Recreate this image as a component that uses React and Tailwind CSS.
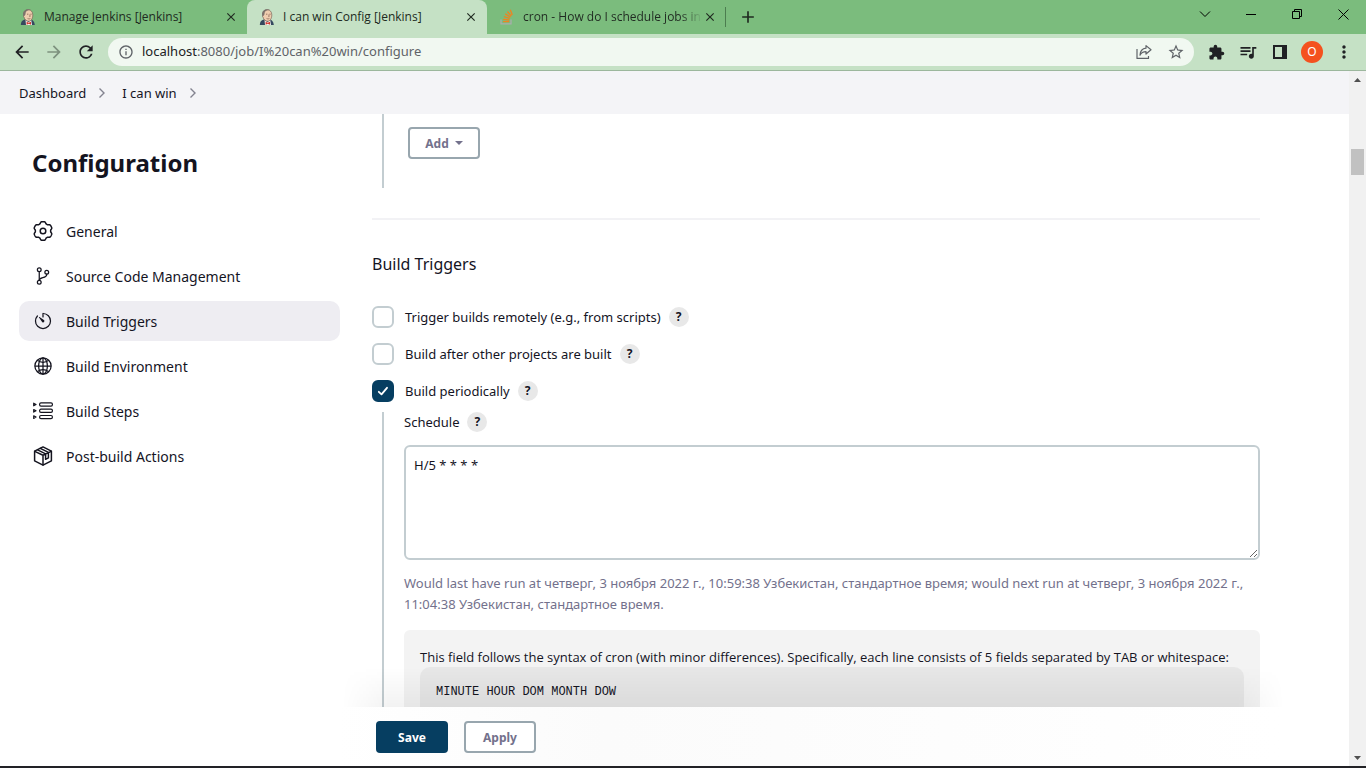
import React, { useState } from "react";
import {
  MdArrowBack,
  MdArrowForward,
  MdRefresh,
  MdExtension,
  MdQueueMusic,
  MdMoreVert,
  MdStarBorder,
  MdClose,
  MdAdd,
  MdInfoOutline,
} from "react-icons/md";
import { IoGitBranchOutline, IoTimerOutline, IoGlobeOutline } from "react-icons/io5";

function JenkinsLogo() {
  return (
    <svg width="16" height="16" viewBox="0 0 16 16" aria-hidden="true">
      <path d="M.8 16c0-3.200 1.400-5 4-5.600l6 .2c2.200.6 3.700 2 4 5.400z" fill="#35495f" />
      <path d="M5.500 11l3 2 2.700-2 .8 5H6z" fill="#f4f1ee" />
      <path d="M4.200 4.600C4.600 2 6.200.700 8.300.700c2.600 0 4.500 2 4.500 5.200 0 3.300-1.500 6.300-4.300 6.300-2.200 0-4-1.800-4.500-4.200-.8-.4-.8-1.900.2-1.800z" fill="#efcdaf" stroke="#6b5449" strokeWidth=".6" />
      <path d="M3.700 7.400C2 4.400 3.600.800 7.400.300c1.600-.2 2.800.100 3.600.700-2.600-.3-4.800.600-5.300 2.500-.2 1 0 2-.8 2.800z" fill="#7d736c" />
      <path d="M7 5.200h1.400M10.300 5.200h1.400M9.700 5.600l.5 1.800-.8.2M7.600 9.500c1 .5 2 .5 2.800 0" fill="none" stroke="#7a5547" strokeWidth=".7" />
      <path d="M6.600 12.700l2.200 1 2.200-1v3l-2.200-1-2.200 1z" fill="#d33a32" />
    </svg>
  );
}

function StackLogo() {
  return (
    <svg width="16" height="16" viewBox="0 0 16 16" aria-hidden="true" fill="none">
      <path d="M2 10.500v4.300h10v-4.300" stroke="#a9adad" strokeWidth="1.300" />
      <path d="M4 12.700h6.200M4.200 10.300l6.100.7M4.900 7.700l5.900 1.700M6.300 4.900l5.200 3.200M8.400 2.500l4 4.500M11.300.8l2 5.300" stroke="#ee8420" strokeWidth="1.300" />
    </svg>
  );
}

const gearPath =
  Array.from({ length: 120 }, (_, i) => {
    const a = (i / 120) * Math.PI * 2;
    const r = 8.45 + 0.9 * Math.tanh(2.2 * (Math.cos(6 * (a - Math.PI / 2)) + 0.3));
    return `${i ? "L" : "M"}${(10 + r * Math.cos(a)).toFixed(2)} ${(10 + r * Math.sin(a)).toFixed(2)}`;
  }).join("") + "Z";

function GearIcon() {
  return (
    <svg width="20" height="20" viewBox="0 0 20 20" fill="none" stroke="currentColor" strokeWidth="1.500" strokeLinejoin="round" aria-hidden="true">
      <path d={gearPath} />
      <circle cx="10" cy="10" r="2.800" />
    </svg>
  );
}

function StepsIcon() {
  return (
    <svg width="20" height="20" viewBox="0 0 20 20" fill="none" stroke="currentColor" strokeWidth="1.200" strokeLinejoin="round" aria-hidden="true">
      <rect x="6.600" y="1.900" width="12.800" height="3.200" rx="1.400" />
      <rect x="6.600" y="8.200" width="12.800" height="3.200" rx="1.400" />
      <rect x="6.600" y="14.500" width="12.800" height="3.200" rx="1.400" />
      <path d="M.7 2.200L3 3.500.7 4.800zM.7 8.500L3 9.800.7 11.100zM.7 14.800L3 16.100.7 17.400z" />
    </svg>
  );
}

function PackageIcon() {
  return (
    <svg width="20" height="20" viewBox="0 0 20 20" fill="none" stroke="currentColor" strokeWidth="1.500" strokeLinejoin="round" strokeLinecap="round" aria-hidden="true">
      <path d="M10 .900l8.400 4.300v9.600L10 19.100l-8.400-4.300V5.200z" />
      <path d="M1.800 5.400L10 9.300l8.200-3.900M10 9.300V19M7.300 2.400l8.100 4v5.500l-2.800 1.400V7.900L4.600 3.900" />
    </svg>
  );
}

function Tab({ icon, title, active, faded }) {
  return (
    <div
      className={
        active
          ? "flex h-full w-60 shrink-0 items-center rounded-t-lg bg-[#c5e1c5] pr-2 pl-3"
          : "flex h-full w-[239px] shrink-0 items-center pr-2 pl-3"
      }
    >
      {icon}
      <span
        className={
          faded
            ? "ml-2 w-[179px] shrink-0 bg-linear-to-r from-[#202a21] from-88% to-[#7bbc7d] bg-clip-text whitespace-nowrap text-transparent"
            : "ml-2 w-[179px] shrink-0 whitespace-nowrap"
        }
      >
        {title}
      </span>
      <button type="button" aria-label="Close tab" className="ml-auto grid size-4 shrink-0 place-items-center">
        <MdClose size={14} />
      </button>
    </div>
  );
}

function TabStrip() {
  return (
    <div className="flex h-[34px] shrink-0 items-center bg-[#7bbc7d] pl-2 font-['Open_Sans','Noto_Sans',sans-serif] text-xs text-[#202a21]">
      <Tab icon={<JenkinsLogo />} title="Manage Jenkins [Jenkins]" />
      <Tab icon={<JenkinsLogo />} title="I can win Config [Jenkins]" active />
      <Tab icon={<StackLogo />} title="cron - How do I schedule jobs in" faded />
      <div className="-ml-px h-5 w-px bg-[#4c7d4f]" />
      <button type="button" aria-label="New tab" className="ml-3 grid size-5 place-items-center">
        <MdAdd size={20} />
      </button>
      <div className="ml-auto flex self-start text-black">
        <button type="button" aria-label="Search tabs" className="grid h-7 w-[46px] place-items-center">
          <svg width="12" height="12" viewBox="0 0 12 12" fill="none" stroke="currentColor"><path d="M1 3.500l5 5 5-5" /></svg>
        </button>
        <button type="button" aria-label="Minimize" className="grid h-7 w-[46px] place-items-center">
          <svg width="10" height="10" viewBox="0 0 10 10" stroke="currentColor"><path d="M0 5.500h10" /></svg>
        </button>
        <button type="button" aria-label="Restore" className="grid h-7 w-[46px] place-items-center">
          <svg width="10" height="10" viewBox="0 0 10 10" fill="none" stroke="currentColor"><path d="M.5 2.500h7v7h-7zM2.500 2.500v-2h7v7h-2" /></svg>
        </button>
        <button type="button" aria-label="Close window" className="grid h-7 w-[46px] place-items-center">
          <svg width="11" height="11" viewBox="0 0 11 11" stroke="currentColor"><path d="M.5.5l10 10M10.500.5l-10 10" /></svg>
        </button>
      </div>
    </div>
  );
}

function Toolbar() {
  return (
    <div className="flex h-[37px] shrink-0 items-center border-b border-[#9cb79d] bg-[#c5e1c5] pr-3 pl-3 text-[#202124]">
      <button type="button" aria-label="Back" className="grid size-5 place-items-center"><MdArrowBack size={20} /></button>
      <button type="button" aria-label="Forward" className="ml-3 grid size-5 place-items-center text-[#7d917e]"><MdArrowForward size={20} /></button>
      <button type="button" aria-label="Reload" className="ml-3 grid size-5 place-items-center"><MdRefresh size={20} /></button>
      <div className="ml-3 flex h-7 flex-1 items-center rounded-full bg-[#f1f8f1] pr-2 pl-2.5 text-[#5f6368]">
        <MdInfoOutline size={16} />
        <div className="ml-2 flex-1 text-[13px]">
          <span className="text-[#202124]">localhost</span>:8080/job/I%20can%20win/configure
        </div>
        <button type="button" aria-label="Share" className="grid size-5 place-items-center">
          <svg width="16" height="16" viewBox="0 0 16 16" fill="none" stroke="currentColor" strokeWidth="1.200" strokeLinejoin="round">
            <path d="M1 5v9.400h11.500V12M10 1.600l5 4.200-5 4.200V7.600C7 7.600 5.200 8.700 4 11.200c.2-4 2.300-6.600 6-7z" />
          </svg>
        </button>
        <button type="button" aria-label="Bookmark" className="ml-3 grid size-5 place-items-center"><MdStarBorder size={18} /></button>
      </div>
      <div className="ml-3 flex items-center gap-3">
        <button type="button" aria-label="Extensions" className="grid size-5 place-items-center"><MdExtension size={17} /></button>
        <button type="button" aria-label="Media" className="grid size-5 place-items-center"><MdQueueMusic size={20} /></button>
        <button type="button" aria-label="Side panel" className="grid size-5 place-items-center">
          <svg width="14" height="14" viewBox="0 0 14 14"><path fill="currentColor" fillRule="evenodd" d="M0 0h14v14H0zM2 2v10h7V2z" /></svg>
        </button>
        <button type="button" aria-label="Profile" className="-mx-px grid size-[22px] place-items-center rounded-full bg-[#f4511e] text-xs text-white">O</button>
        <button type="button" aria-label="Menu" className="grid size-5 place-items-center"><MdMoreVert size={20} /></button>
      </div>
    </div>
  );
}

function Chevron() {
  return (
    <svg width="8" height="12" viewBox="0 0 8 12" fill="none" stroke="#83838f" strokeWidth="1.400" aria-hidden="true">
      <path d="M1.500 1.500L6 6l-4.500 4.500" />
    </svg>
  );
}

const sections = [
  { name: "General", icon: <GearIcon /> },
  { name: "Source Code Management", icon: <IoGitBranchOutline size={20} /> },
  { name: "Build Triggers", icon: <IoTimerOutline size={20} />, active: true },
  { name: "Build Environment", icon: <IoGlobeOutline size={20} /> },
  { name: "Build Steps", icon: <StepsIcon /> },
  { name: "Post-build Actions", icon: <PackageIcon /> },
];

function Sidebar() {
  return (
    <aside className="w-[340px] shrink-0 pl-[19px]">
      <h1 className="mt-[31px] pl-[13px] text-2xl leading-9 font-bold text-[#14141f]">Configuration</h1>
      <nav className="mt-[30px] flex flex-col gap-[5px]">
        {sections.map((s) => (
          <a
            key={s.name}
            href="#"
            className={
              s.active
                ? "flex h-10 items-center gap-[13px] rounded-[10px] bg-[#eeedf2] px-3.5 text-sm text-[#14141f]"
                : "flex h-10 items-center gap-[13px] rounded-[10px] px-3.5 text-sm text-[#14141f]"
            }
          >
            {s.icon}
            <span className="pt-0.5">{s.name}</span>
          </a>
        ))}
      </nav>
    </aside>
  );
}

function Help({ topic }) {
  return (
    <button type="button" aria-label={`Help for ${topic}`} className="grid size-5 place-items-center rounded-full bg-[#e8e8e8] text-xs font-bold">
      ?
    </button>
  );
}

function CheckRow({ id, label, initial }) {
  const [on, setOn] = useState(initial);
  return (
    <div className="flex h-[22px] items-center">
      <span className="grid size-[22px]">
        <input
          id={id}
          type="checkbox"
          checked={on}
          onChange={(e) => setOn(e.target.checked)}
          className="col-start-1 row-start-1 appearance-none rounded-md border-2 border-[#c3cdd1] bg-white checked:border-[#063e61] checked:bg-[#063e61]"
        />
        {on && (
          <svg className="pointer-events-none col-start-1 row-start-1" viewBox="0 0 22 22" fill="none" stroke="#fff" strokeWidth="1.800" strokeLinecap="round" strokeLinejoin="round">
            <path d="M6.800 11.800l2.700 2.500 5.500-6.500" />
          </svg>
        )}
      </span>
      <label htmlFor={id} className="mr-2 ml-[11px] pt-0.5">{label}</label>
      <Help topic={label} />
    </div>
  );
}

function BuildTriggers() {
  return (
    <main className="min-w-0 flex-1 text-[13px] text-[#14141f]">
      <div className="ml-2.5 h-[74px] border-l-2 border-[#c3cdd1] pt-[13px] pl-6">
        <button type="button" className="flex h-8 w-[72px] items-center justify-center gap-1.5 rounded border-2 border-[#98a6ae] text-xs font-bold text-[#73718c]">
          <span className="pt-0.5">Add</span>
          <svg width="8" height="4" viewBox="0 0 8 4" aria-hidden="true"><path d="M0 0h8L4 4z" fill="currentColor" /></svg>
        </button>
      </div>
      <hr className="mt-[30px] border-t-2 border-[#f2f2f5]" />
      <h2 className="mt-8 text-base leading-6">Build Triggers</h2>
      <div className="mt-[30px] flex flex-col gap-[15px]">
        <CheckRow id="remote" label="Trigger builds remotely (e.g., from scripts)" initial={false} />
        <CheckRow id="after" label="Build after other projects are built" initial={false} />
        <CheckRow id="periodic" label="Build periodically" initial={true} />
      </div>
      <div className="mt-2.5 ml-2.5 h-[400px] border-l-2 border-[#c3cdd1] pl-5">
        <div className="flex h-5 items-center gap-2">
          <label htmlFor="schedule" className="pt-0.5">Schedule</label>
          <Help topic="Schedule" />
        </div>
        <textarea
          id="schedule"
          defaultValue="H/5 * * * *"
          className="mt-[13px] block h-[115px] w-full resize rounded-md border-2 border-[#c3cdd1] px-2 py-2 leading-5"
        />
        <p className="mt-[13px] leading-[21px] text-[#73718c]">
          Would last have run at четверг, 3 ноября 2022 г., 10:59:38 Узбекистан, стандартное время; would next run at четверг, 3 ноября 2022 г., 11:04:38 Узбекистан, стандартное время.
        </p>
        <div className="mt-[15px] h-60 rounded-md bg-[#f3f3f3] px-4 pt-[17px]">
          <p className="font-['Open_Sans','Noto_Sans',sans-serif] leading-5 whitespace-nowrap">
            This field follows the syntax of cron (with minor differences). Specifically, each line consists of 5 fields separated by TAB or whitespace:
          </p>
          <pre className="h-40 rounded-[10px] bg-[#e7e7e7] px-4 pt-[17px] font-['Liberation_Mono',monospace] text-xs leading-4">MINUTE HOUR DOM MONTH DOW</pre>
        </div>
      </div>
    </main>
  );
}

export default function App() {
  return (
    <div className="flex h-screen flex-col overflow-hidden border-b-2 border-[#222226] bg-white font-['Noto_Sans','Open_Sans',sans-serif]">
      <TabStrip />
      <Toolbar />
      <div className="flex min-h-0 flex-1">
        <div className="flex min-w-0 flex-1 flex-col">
          <nav aria-label="Breadcrumb" className="flex h-[43px] shrink-0 items-center bg-[#f4f4f7] pl-[19px] text-[13px] text-[#14141f]">
            <a href="#" className="mr-3 pt-0.5">Dashboard</a>
            <Chevron />
            <a href="#" className="mr-3 ml-4 pt-0.5">I can win</a>
            <Chevron />
          </nav>
          <div className="relative flex min-h-0 flex-1 gap-8 overflow-hidden pr-[89px]">
            <Sidebar />
            <BuildTriggers />
            <div className="pointer-events-none absolute right-[65px] bottom-0 left-[342px] h-10 bg-linear-to-t from-black/5 to-transparent mask-r-from-95% mask-l-from-95%" />
          </div>
          <div className="flex h-[59px] shrink-0 gap-4 bg-linear-to-r from-white from-25% via-[#fbfbfb] via-45% to-white to-95% pt-3.5 pl-[376px] text-xs font-bold">
            <button type="button" className="h-8 w-[72px] rounded bg-[#063e61] pt-0.5 text-white">Save</button>
            <button type="button" className="h-8 w-[72px] rounded border-2 border-[#98a6ae] bg-white pt-0.5 text-[#73718c]">Apply</button>
          </div>
        </div>
        <div className="flex w-[17px] shrink-0 flex-col items-center bg-[#f1f1f1] py-1.5">
          <svg width="7" height="4" viewBox="0 0 7 4" className="mt-px" aria-hidden="true"><path d="M0 4h7L3.500 0z" fill="#505050" /></svg>
          <div className="mt-[67px] h-[26px] w-[13px] bg-[#c1c1c1]" />
          <svg width="7" height="4" viewBox="0 0 7 4" className="mt-auto" aria-hidden="true"><path d="M0 0h7L3.500 4z" fill="#505050" /></svg>
        </div>
      </div>
    </div>
  );
}
